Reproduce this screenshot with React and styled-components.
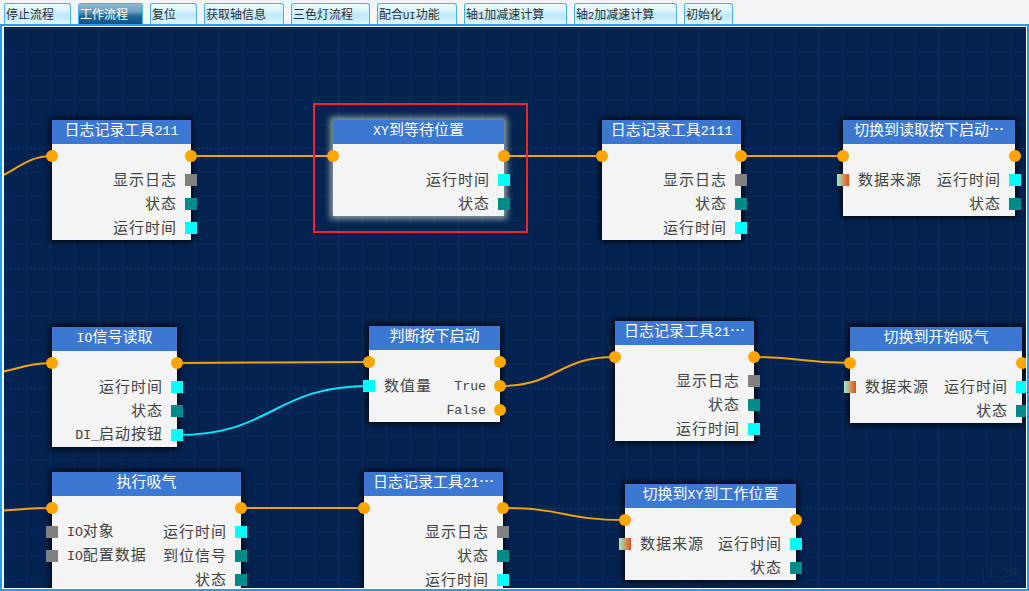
import React from "react";
import styled, { createGlobalStyle, css } from "styled-components";

const CJK = `"Noto Sans CJK SC", "Noto Sans", sans-serif`;

const GlobalStyle = createGlobalStyle`
  html, body { margin: 0; padding: 0; }
  body { background: #f4f4f4; font-family: ${CJK}; }
`;

const Window = styled.div`
  width: 1029px;
  height: 591px;
  display: flex;
  flex-direction: column;
  background: #f4f4f4;
  overflow: hidden;
`;

const TabBar = styled.div`
  flex: none;
  height: 24px;
  box-sizing: border-box;
  padding-left: 4px;
  display: flex;
  align-items: flex-end;
  gap: 7px;
`;

const Tab = styled.div`
  flex: none;
  box-sizing: border-box;
  width: ${(p) => p.$w}px;
  height: 21px;
  border: 1px solid #44b2f4;
  border-bottom: none;
  border-radius: 3px 3px 0 0;
  padding-left: 1px;
  font-size: 12px;
  line-height: 19px;
  color: #2e2e2e;
  white-space: nowrap;
  background: linear-gradient(180deg, #f3fbff 0%, #def5fe 30%, #bce8fb 55%, #cfeffd 80%, #e6f8ff 100%);
  ${(p) =>
    p.$active &&
    css`
      color: #ffffff;
      background: linear-gradient(180deg, #8fbbd2 0%, #6b9ebe 38%, #1f6a98 60%, #0c5486 100%);
    `}
`;

const Frame = styled.div`
  flex: 1;
  min-height: 0;
  display: flex;
  border: 2px solid #1f9ff1;
`;

const Canvas = styled.div`
  flex: 1;
  position: relative;
  overflow: hidden;
  background: #042350;
  border: 1px solid #ffffff;
  border-left-width: 2px;
`;

const Drawing = styled.svg`
  position: absolute;
  left: 0;
  top: 0;
  width: 100%;
  height: 100%;
  display: block;
`;

const NodeBox = styled.div`
  position: absolute;
  left: ${(p) => p.$x}px;
  top: ${(p) => p.$y}px;
  width: ${(p) => p.$w}px;
  background: #f4f4f4;
  box-shadow: ${(p) =>
    p.$selected ? "0 0 6px 3px rgba(255, 255, 232, 0.55)" : "0 0 6px 2px rgba(0, 0, 0, 0.8)"};
`;

const NodeHeader = styled.div`
  height: 24px;
  box-sizing: border-box;
  padding: 0 3px;
  background: #3c77d1;
  color: #ffffff;
  font-size: 15px;
  line-height: 18px;
  text-align: center;
  white-space: nowrap;
`;

const Row = styled.div`
  height: 24px;
  margin: 0 -6px;
  display: flex;
  align-items: center;
  font-size: 15px;
  line-height: 18px;
  letter-spacing: 1px;
  color: #424242;
  white-space: nowrap;
`;

const portColors = {
  gray: "#808080",
  teal: "#008b8b",
  cyan: "#00ffff",
  grad: "linear-gradient(90deg, #9af0cc 0%, #f04a12 100%)",
  flow: "#ffa500",
  none: "transparent",
};

const Port = styled.span`
  flex: none;
  width: 12px;
  height: 12px;
  background: ${(p) => portColors[p.$kind || "none"]};
  border-radius: ${(p) => (p.$kind === "flow" ? "50%" : "0")};
`;

const Label = styled.span`
  margin: ${(p) => (p.$side === "left" ? "0 0 0 9px" : "0 8px 0 0")};
  padding-bottom: 2px;
`;

const Spacer = styled.span`
  flex: 1;
`;

const Latin = styled.span`
  font-family: "Liberation Mono", monospace;
  font-size: 0.88em;
  letter-spacing: 0;
`;

const Selection = styled.div`
  position: absolute;
  left: ${(p) => p.$x}px;
  top: ${(p) => p.$y}px;
  width: ${(p) => p.$w}px;
  height: ${(p) => p.$h}px;
  box-sizing: border-box;
  border: 2px solid #f22626;
  pointer-events: none;
`;

const ZoomBadge = styled.div`
  position: absolute;
  right: 5px;
  bottom: 6px;
  width: 38px;
  height: 16px;
  box-sizing: border-box;
  border: 1px solid #0a2a57;
  color: #112f5d;
  font: 13px/14px "Liberation Mono", monospace;
  text-align: center;
`;

function Txt({ children }) {
  const parts = String(children).split(/([A-Za-z0-9_.]+)/);
  return parts.map((p, i) =>
    /^[A-Za-z0-9_.]+$/.test(p) ? (
      <Latin key={i}>{p}</Latin>
    ) : p ? (
      <React.Fragment key={i}>{p}</React.Fragment>
    ) : null
  );
}

const TABS = [
  { label: "停止流程", w: 67 },
  { label: "工作流程", w: 65, active: true },
  { label: "复位", w: 47 },
  { label: "获取轴信息", w: 80 },
  { label: "三色灯流程", w: 79 },
  { label: "配合UI功能", w: 80 },
  { label: "轴1加减速计算", w: 103 },
  { label: "轴2加减速计算", w: 103 },
  { label: "初始化", w: 49 },
];

const FLOW = { l: "flow", r: "flow" };
const LOG_ROWS = [
  FLOW,
  { rt: "显示日志", r: "gray" },
  { rt: "状态", r: "teal" },
  { rt: "运行时间", r: "cyan" },
];
const SWITCH_ROWS = [
  FLOW,
  { l: "grad", lt: "数据来源", rt: "运行时间", r: "cyan" },
  { rt: "状态", r: "teal" },
];

const NODES = [
  { id: 1, x: 48, y: 93, w: 139, title: "日志记录工具211", rows: LOG_ROWS },
  {
    id: 2,
    x: 329,
    y: 93,
    w: 171,
    title: "XY到等待位置",
    selected: true,
    rows: [FLOW, { rt: "运行时间", r: "cyan" }, { rt: "状态", r: "teal" }],
  },
  { id: 3, x: 598, y: 93, w: 139, title: "日志记录工具2111", rows: LOG_ROWS },
  { id: 4, x: 839, y: 93, w: 172, title: "切换到读取按下启动…", rows: SWITCH_ROWS },
  {
    id: 5,
    x: 48,
    y: 300,
    w: 125,
    title: "IO信号读取",
    rows: [
      FLOW,
      { rt: "运行时间", r: "cyan" },
      { rt: "状态", r: "teal" },
      { rt: "DI_启动按钮", r: "cyan" },
    ],
  },
  {
    id: 6,
    x: 365,
    y: 299,
    w: 131,
    title: "判断按下启动",
    rows: [
      FLOW,
      { l: "cyan", lt: "数值量", rt: "True", r: "flow" },
      { rt: "False", r: "flow" },
    ],
  },
  { id: 7, x: 611, y: 294, w: 139, title: "日志记录工具21…", rows: LOG_ROWS },
  { id: 8, x: 846, y: 300, w: 172, title: "切换到开始吸气", rows: SWITCH_ROWS },
  {
    id: 9,
    x: 48,
    y: 445,
    w: 189,
    title: "执行吸气",
    rows: [
      FLOW,
      { l: "gray", lt: "IO对象", rt: "运行时间", r: "cyan" },
      { l: "gray", lt: "IO配置数据", rt: "到位信号", r: "teal" },
      { rt: "状态", r: "teal" },
    ],
  },
  { id: 10, x: 360, y: 445, w: 139, title: "日志记录工具21…", rows: LOG_ROWS },
  { id: 11, x: 621, y: 457, w: 171, title: "切换到XY到工作位置", rows: SWITCH_ROWS },
];

const WIRES = [
  [1, 0, 2, 0],
  [2, 0, 3, 0],
  [3, 0, 4, 0],
  [5, 0, 6, 0],
  [5, 3, 6, 1, "cyan"],
  [6, 1, 7, 0],
  [7, 0, 8, 0],
  [9, 0, 10, 0],
  [10, 0, 11, 0],
];

const STUBS = [
  "M -12 154 C 14 142, 24 129, 48 129",
  "M -12 347 C 14 342, 24 336, 48 336",
  "M -12 484 C 14 483, 24 481, 48 481",
];

const byId = Object.fromEntries(NODES.map((n) => [n.id, n]));
const portY = (n, row) => n.y + 36 + row * 24;

function wirePath([a, ra, b, rb]) {
  const na = byId[a];
  const nb = byId[b];
  const x1 = na.x + na.w;
  const y1 = portY(na, ra);
  const x2 = nb.x;
  const y2 = portY(nb, rb);
  const d = Math.max(Math.abs(x2 - x1) / 2, 20);
  return `M ${x1} ${y1} C ${x1 + d} ${y1}, ${x2 - d} ${y2}, ${x2} ${y2}`;
}

function Node({ node }) {
  return (
    <NodeBox $x={node.x} $y={node.y} $w={node.w} $selected={node.selected}>
      <NodeHeader>
        <Txt>{node.title}</Txt>
      </NodeHeader>
      {node.rows.map((row, i) => (
        <Row key={i}>
          <Port $kind={row.l} />
          {row.lt && (
            <Label $side="left">
              <Txt>{row.lt}</Txt>
            </Label>
          )}
          <Spacer />
          {row.rt && (
            <Label $side="right">
              <Txt>{row.rt}</Txt>
            </Label>
          )}
          <Port $kind={row.r} />
        </Row>
      ))}
    </NodeBox>
  );
}

export default function App() {
  return (
    <>
      <GlobalStyle />
      <Window>
        <TabBar>
          {TABS.map((t) => (
            <Tab key={t.label} $w={t.w} $active={t.active}>
              <Txt>{t.label}</Txt>
            </Tab>
          ))}
        </TabBar>
        <Frame>
          <Canvas>
            <Drawing>
              <defs>
                <pattern id="gridMinor" width="24" height="24" x="22" y="1" patternUnits="userSpaceOnUse">
                  <path d="M 0.5 0 V 24 M 0 0.5 H 24" stroke="#092a58" strokeWidth="1" fill="none" />
                </pattern>
                <pattern id="gridMajor" width="120" height="120" x="94" y="1" patternUnits="userSpaceOnUse">
                  <path
                    d="M 0.5 0 V 120 M 0 0.5 H 120"
                    stroke="#14386a"
                    strokeWidth="1"
                    strokeDasharray="2 2"
                    fill="none"
                  />
                </pattern>
              </defs>
              <rect width="100%" height="100%" fill="url(#gridMinor)" />
              <rect width="100%" height="100%" fill="url(#gridMajor)" />
              {STUBS.map((d, i) => (
                <path key={`s${i}`} d={d} stroke="#f0a30a" strokeWidth="2" fill="none" />
              ))}
              {WIRES.map((w, i) => (
                <path
                  key={i}
                  d={wirePath(w)}
                  stroke={w[4] === "cyan" ? "#00e8ff" : "#f0a30a"}
                  strokeWidth="2"
                  fill="none"
                />
              ))}
            </Drawing>
            {NODES.map((n) => (
              <Node key={n.id} node={n} />
            ))}
            <Selection $x={309} $y={76} $w={215} $h={130} />
            <ZoomBadge>1.20</ZoomBadge>
          </Canvas>
        </Frame>
      </Window>
    </>
  );
}
